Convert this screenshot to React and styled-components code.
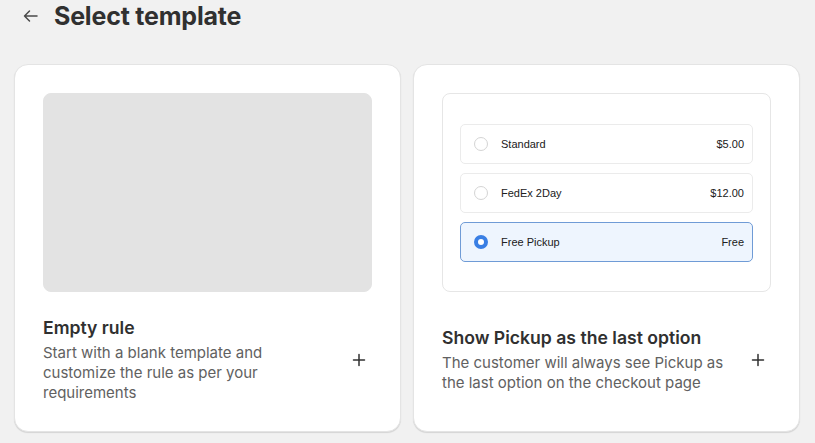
import React from 'react';
import styled, {createGlobalStyle} from 'styled-components';

const GlobalStyle = createGlobalStyle`
  html, body {
    margin: 0;
    padding: 0;
    background: #f1f1f1;
  }
  body {
    font-family: Inter, "Noto Sans", sans-serif;
    color: #303030;
  }
`;

const Page = styled.div`
  width: 815px;
  height: 443px;
  padding: 0 15px 0 14px;
  box-sizing: border-box;
  overflow: hidden;
`;

const Header = styled.div`
  display: flex;
  align-items: center;
  gap: 15px;
  height: 32px;
  padding-left: 7px;
  margin-bottom: 32px;
`;

const BackButton = styled.button`
  display: flex;
  align-items: center;
  justify-content: center;
  width: 18px;
  height: 18px;
  padding: 0;
  border: none;
  background: none;
  color: #4a4a4a;
  cursor: pointer;
`;

const Title = styled.h1`
  margin: 0;
  font-size: 25px;
  line-height: 32px;
  font-weight: 700;
  letter-spacing: -0.2px;
  color: #303030;
`;

const Grid = styled.div`
  display: grid;
  grid-template-columns: 1fr 1fr;
  gap: 12px;
`;

const Card = styled.div`
  display: flex;
  flex-direction: column;
  height: 368px;
  box-sizing: border-box;
  padding: 28px 28px 0;
  background: #fff;
  border: 1px solid #e4e4e4;
  border-radius: 14px;
  box-shadow: 0 1px 1px rgba(0, 0, 0, 0.12);
`;

const Placeholder = styled.div`
  height: 199px;
  flex-shrink: 0;
  border-radius: 8px;
  background: ${(props) => (props.$empty ? '#e3e3e3' : '#fff')};
  border: 1px solid ${(props) => (props.$empty ? '#e3e3e3' : '#e6e6e6')};
  box-sizing: border-box;
  display: flex;
  flex-direction: column;
  justify-content: center;
  gap: 9px;
  padding: 0 17px;
`;

const Option = styled.div`
  display: flex;
  align-items: center;
  height: 40px;
  box-sizing: border-box;
  padding: 0 8px 0 13px;
  border-radius: 5px;
  border: 1px solid ${(props) => (props.$selected ? '#6f9bd6' : '#ebebeb')};
  background: ${(props) => (props.$selected ? '#eef5fe' : '#fff')};
  font-family: "Liberation Sans", Arial, sans-serif;
  font-size: 11px;
  color: #202020;
`;

const Radio = styled.span`
  width: 14px;
  height: 14px;
  box-sizing: border-box;
  border-radius: 50%;
  border: ${(props) => (props.$checked ? '4px solid #3a7fe4' : '1px solid #d4d4d4')};
  background: #fff;
  margin-right: 13px;
`;

const OptionLabel = styled.span`
  flex: 1;
`;

const Body = styled.div`
  flex: 1;
  display: flex;
  align-items: center;
  gap: 16px;
  padding: 0 4px 4px 0;
`;

const Text = styled.div`
  flex: 1;
  display: flex;
  flex-direction: column;
  gap: 3px;
`;

const CardTitle = styled.h2`
  margin: 0;
  font-size: 17.6px;
  line-height: 24px;
  font-weight: 600;
  color: #303030;
`;

const Description = styled.p`
  margin: 0;
  font-size: 15px;
  line-height: 20px;
  color: #616161;
  max-width: ${(props) => props.$width}px;
`;

const AddButton = styled.button`
  display: flex;
  align-items: center;
  justify-content: center;
  width: 18px;
  height: 18px;
  padding: 0;
  border: none;
  background: none;
  color: #303030;
  cursor: pointer;
`;

const ArrowIcon = () => (
  <svg width="17" height="16" viewBox="0 0 17 16" fill="none">
    <path d="M15 8H2.5M7.5 3L2.5 8l5 5" stroke="currentColor" strokeWidth="1.5" strokeLinecap="round" strokeLinejoin="round"/>
  </svg>
);

const PlusIcon = () => (
  <svg width="14" height="14" viewBox="0 0 14 14" fill="none">
    <path d="M7 1.5v11M1.5 7h11" stroke="currentColor" strokeWidth="1.5" strokeLinecap="round"/>
  </svg>
);

const options = [
  {label: 'Standard', price: '$5.00'},
  {label: 'FedEx 2Day', price: '$12.00'},
  {label: 'Free Pickup', price: 'Free', selected: true},
];

function TemplateCard({title, description, width, children, empty}) {
  return (
    <Card>
      <Placeholder $empty={empty}>{children}</Placeholder>
      <Body>
        <Text>
          <CardTitle>{title}</CardTitle>
          <Description $width={width}>{description}</Description>
        </Text>
        <AddButton aria-label="Add template"><PlusIcon/></AddButton>
      </Body>
    </Card>
  );
}

export default function App() {
  return (
    <Page>
      <GlobalStyle/>
      <Header>
        <BackButton aria-label="Back"><ArrowIcon/></BackButton>
        <Title>Select template</Title>
      </Header>
      <Grid>
        <TemplateCard
          empty
          title="Empty rule"
          width={285}
          description="Start with a blank template and customize the rule as per your requirements"
        />
        <TemplateCard
          title="Show Pickup as the last option"
          width={292}
          description="The customer will always see Pickup as the last option on the checkout page"
        >
          {options.map((o) => (
            <Option key={o.label} $selected={o.selected}>
              <Radio $checked={o.selected}/>
              <OptionLabel>{o.label}</OptionLabel>
              <span>{o.price}</span>
            </Option>
          ))}
        </TemplateCard>
      </Grid>
    </Page>
  );
}
